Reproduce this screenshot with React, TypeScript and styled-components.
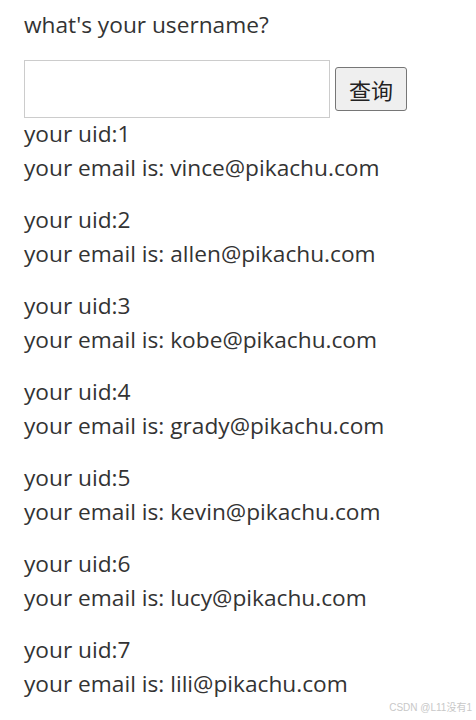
import styled, { createGlobalStyle } from "styled-components";

const GlobalStyle = createGlobalStyle`
  body {
    margin: 0;
    background: #fff;
    font-family: "Open Sans", "Noto Sans CJK SC", sans-serif;
    color: #333;
  }
`;

const Page = styled.div`
  position: relative;
  width: 476px;
  height: 720px;
  padding: 8px 24px 0;
  box-sizing: border-box;
  overflow: hidden;
`;

const Label = styled.p`
  margin: 0 0 18px;
  font-size: 22.7px;
  line-height: 34px;
`;

const SearchForm = styled.form`
  display: flex;
  align-items: center;
  gap: 5px;
  margin: 0;
`;

const Input = styled.input`
  width: 306px;
  height: 58px;
  box-sizing: border-box;
  border: 1px solid #ccc;
  background: #fff;
  outline: none;
  font-size: 20px;
`;

const Submit = styled.button`
  height: 44px;
  padding: 0 13px;
  border: 1px solid #767676;
  border-radius: 3px;
  background: #efefef;
  color: #222;
  font-family: "Noto Sans CJK SC", sans-serif;
  font-size: 22px;
`;

const Results = styled.div`
  margin-top: -1px;
`;

const Result = styled.p`
  margin: 0 0 18px;
  font-size: 22.7px;
  line-height: 34px;
`;

const Watermark = styled.span`
  position: absolute;
  right: 4px;
  bottom: 6px;
  font-family: "Liberation Sans", "Noto Sans CJK SC", sans-serif;
  font-size: 10px;
  color: #c8c8c8;
`;

const users = [
  { uid: 1, email: "vince@pikachu.com" },
  { uid: 2, email: "allen@pikachu.com" },
  { uid: 3, email: "kobe@pikachu.com" },
  { uid: 4, email: "grady@pikachu.com" },
  { uid: 5, email: "kevin@pikachu.com" },
  { uid: 6, email: "lucy@pikachu.com" },
  { uid: 7, email: "lili@pikachu.com" },
];

function App() {
  return (
    <>
      <GlobalStyle />
      <Page>
        <Label>what's your username?</Label>
        <SearchForm onSubmit={(e) => e.preventDefault()}>
          <Input type="text" />
          <Submit type="submit">查询</Submit>
        </SearchForm>
        <Results>
          {users.map((u) => (
            <Result key={u.uid}>
              your uid:{u.uid}
              <br />
              your email is: {u.email}
            </Result>
          ))}
        </Results>
        <Watermark>CSDN @L11没有1</Watermark>
      </Page>
    </>
  );
}

export default App;
